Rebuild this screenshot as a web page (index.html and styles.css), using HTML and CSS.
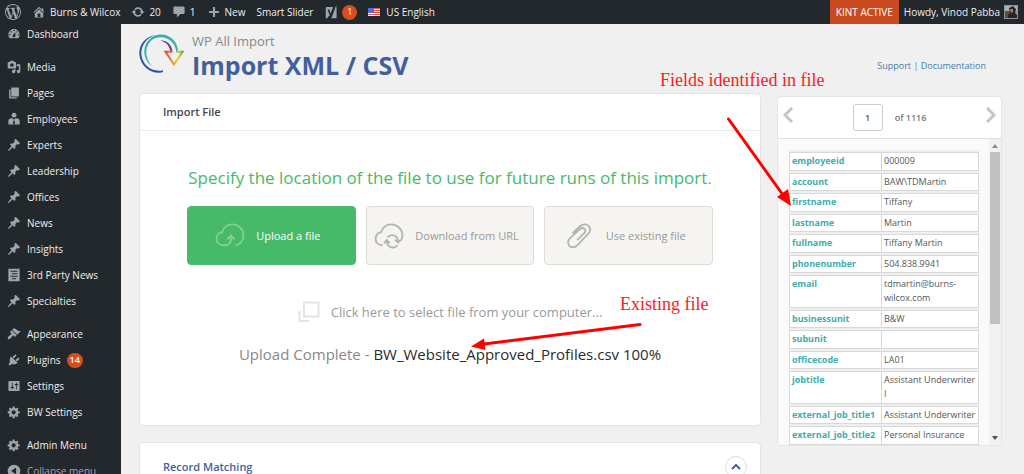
FILE: index.html
```html
<!DOCTYPE html>
<html lang="en">
<head>
<meta charset="utf-8">
<meta name="viewport" content="width=device-width, initial-scale=1">
<title>Import XML / CSV</title>
<link rel="stylesheet" href="styles.css">
</head>
<body>
<svg class="sprite" aria-hidden="true">
  <symbol id="pin" viewBox="0 0 20 20"><path d="M10.44 3.02l1.82-1.82 6.36 6.35-1.83 1.82c-1.05-.68-2.48-.57-3.41.36l-.75.75c-.92.93-1.04 2.35-.35 3.41l-1.83 1.82-2.41-2.41-2.8 2.79c-.42.42-3.38 2.71-3.8 2.29s1.86-3.39 2.28-3.81l2.79-2.79L4.1 9.36l1.83-1.82c1.05.69 2.48.57 3.4-.36l.75-.75c.93-.92 1.05-2.35.36-3.41z"/></symbol>
  <symbol id="gear" viewBox="0 0 20 20"><path d="M18 12h-2.18c-.17.7-.44 1.35-.81 1.93l1.54 1.54-2.1 2.1-1.54-1.54c-.58.36-1.23.63-1.91.79V19H8v-2.18c-.68-.16-1.33-.43-1.91-.79l-1.54 1.54-2.12-2.12 1.54-1.54c-.36-.58-.63-1.23-.79-1.91H1V9.03h2.17c.16-.7.44-1.35.8-1.94L2.43 5.55l2.1-2.1 1.54 1.54c.58-.37 1.24-.64 1.93-.81V2h3v2.18c.68.16 1.33.43 1.91.79l1.54-1.54 2.12 2.12-1.54 1.54c.36.59.64 1.24.8 1.94H18V12zm-8.5 1.5c1.66 0 3-1.34 3-3s-1.34-3-3-3-3 1.34-3 3 1.34 3 3 3z"/></symbol>
</svg>

<header class="topbar">
  <a class="bar-item" href="#" aria-label="WordPress"><svg class="icon icon-wp" viewBox="0 0 20 20"><path d="M20 10c0-5.51-4.49-10-10-10C4.48 0 0 4.49 0 10c0 5.52 4.48 10 10 10 5.51 0 10-4.48 10-10zM7.78 15.37L4.37 6.22c.55-.02 1.17-.08 1.17-.08.5-.06.44-1.13-.06-1.11 0 0-1.45.11-2.37.11-.18 0-.37 0-.58-.01C4.12 2.69 6.87 1.11 10 1.11c2.33 0 4.45.87 6.05 2.34-.68-.11-1.65.39-1.65 1.58 0 .74.45 1.36.9 2.1.35.61.55 1.36.55 2.46 0 1.49-1.4 5-1.4 5l-3.03-8.37c.54-.02.82-.17.82-.17.5-.05.44-1.25-.06-1.22 0 0-1.44.12-2.38.12-.87 0-2.33-.12-2.33-.12-.5-.03-.56 1.2-.06 1.22l.92.08 1.26 3.41zM17.41 10c.24-.64.74-1.87.43-4.25.7 1.29 1.05 2.71 1.05 4.25 0 3.29-1.73 6.24-4.4 7.78.97-2.59 1.94-5.2 2.92-7.78zM6.1 18.09C3.12 16.65 1.11 13.53 1.11 10c0-1.3.23-2.48.72-3.59C3.25 10.3 4.67 14.2 6.1 18.09zm4.03-6.63l2.58 6.98c-.86.29-1.76.45-2.71.45-.79 0-1.57-.11-2.29-.33.81-2.38 1.62-4.74 2.42-7.1z"/></svg></a>
  <a class="bar-item" href="#"><svg class="icon" viewBox="0 0 20 20"><path d="M16 8.5l1.53 1.53-1.06 1.06L10 4.6l-6.47 6.49-1.06-1.06L10 2.5l4 4v-2h2v4zm-6-2.46l6 5.99V18H4v-5.97zM12 17v-5H8v5h4z"/></svg>Burns &amp; Wilcox</a>
  <a class="bar-item" href="#"><svg class="icon" viewBox="0 0 20 20"><path d="M10.2 3.28c3.53 0 6.43 2.61 6.92 6h2.08l-3.5 4-3.5-4h2.32c-.45-1.97-2.21-3.45-4.32-3.45-1.45 0-2.73.71-3.54 1.78L4.95 5.66C6.23 4.2 8.11 3.28 10.2 3.28zm-.4 13.44c-3.52 0-6.43-2.61-6.92-6H.8l3.5-4c1.17 1.33 2.33 2.67 3.5 4H5.48c.45 1.97 2.21 3.45 4.32 3.45 1.45 0 2.73-.71 3.54-1.78l1.71 1.95c-1.28 1.46-3.15 2.38-5.25 2.38z"/></svg>20</a>
  <a class="bar-item" href="#"><svg class="icon" viewBox="0 0 20 20"><path d="M4 2h12c1.100 0 2 .9 2 2v7c0 1.100-.9 2-2 2h-4l-5 5v-5H4c-1.100 0-2-.9-2-2V4c0-1.100.9-2 2-2z"/></svg>1</a>
  <a class="bar-item" href="#"><svg class="icon" viewBox="0 0 20 20"><path d="M17 8.500v3h-5.500V17h-3v-5.500H3v-3h5.500V3h3v5.500z"/></svg>New</a>
  <a class="bar-item" href="#">Smart Slider</a>
  <a class="bar-item" href="#" aria-label="SEO, 1 notice"><svg class="icon" viewBox="0 0 20 20"><path d="M4 3h9L9.500 12 7.500 6.500H5l3.200 8.300c-.5 1.200-1.200 1.900-2.700 2.100V19H2.500V4.500C2.500 3.700 3.200 3 4 3zm13-1.500L11.500 16.500c-.3.900-.7 1.700-1.200 2.500H18V5.500c0-1-.2-1.600-.6-2.100l.9-1.900z"/></svg><span class="badge">1</span></a>
  <a class="bar-item" href="#"><svg class="flag" viewBox="0 0 12 8"><path fill="#fff" d="M0 0h12v8H0z"/><path stroke="#e8504c" d="M0 .5h12M0 2.500h12M0 4.500h12M0 6.500h12"/><path fill="#4a6ee0" d="M0 0h6v5H0z"/></svg>US English</a>
  <div class="bar-end">
    <a class="kint" href="#">KINT ACTIVE</a>
    <a class="bar-item" href="#">Howdy, Vinod Pabba
      <svg class="avatar" viewBox="0 0 14 14"><path fill="#8e9295" d="M0 0h14v14H0z"/><path fill="#9fb4bd" d="M1 1h12v5H1z"/><path fill="#6b4741" d="M1 6h5v7H1z"/><path fill="#2b2423" d="M5 3l4-2 3 3-1 4 2 2v3H4v-3l2-2z"/><path fill="#b5796a" d="M6 4l3 0v3l-2 1z"/></svg></a>
  </div>
</header>

<div class="shell">
  <nav class="menu" aria-label="Admin">
    <ul class="menu-group">
      <li><a href="#"><svg class="icon" viewBox="0 0 20 20"><path d="M3.760 16h12.480c1.100-1.370 1.760-3.110 1.760-5 0-4.420-3.580-8-8-8s-8 3.580-8 8c0 1.890.66 3.630 1.760 5zM10 4c.55 0 1 .45 1 1s-.45 1-1 1-1-.45-1-1 .45-1 1-1zM6 6c.55 0 1 .45 1 1s-.45 1-1 1-1-.45-1-1 .45-1 1-1zm8 0c.55 0 1 .45 1 1s-.45 1-1 1-1-.45-1-1 .45-1 1-1zm-5.370 5.550L12 7v6c0 1.100-.9 2-2 2s-2-.9-2-2c0-.57.24-1.080.63-1.450zM4 10c.55 0 1 .45 1 1s-.45 1-1 1-1-.45-1-1 .45-1 1-1zm12 0c.55 0 1 .45 1 1s-.45 1-1 1-1-.45-1-1 .45-1 1-1z"/></svg>Dashboard</a></li>
    </ul>
    <ul class="menu-group">
      <li><a href="#"><svg class="icon" viewBox="0 0 20 20"><path d="M13 11V4c0-.55-.45-1-1-1h-1.670L9 1H5L3.670 3H2c-.55 0-1 .45-1 1v7c0 .55.45 1 1 1h10c.55 0 1-.45 1-1zM7 4.500c1.380 0 2.500 1.120 2.500 2.500S8.380 9.500 7 9.500 4.500 8.380 4.500 7 5.620 4.500 7 4.500zM14 6h5v10.500c0 1.380-1.120 2.500-2.500 2.500S14 17.880 14 16.500s1.120-2.500 2.500-2.500c.17 0 .34.020.5.050V9h-3V6zm-4 8.050V13h2v3.500c0 1.380-1.120 2.500-2.500 2.500S7 17.880 7 16.500 8.120 14 9.500 14c.17 0 .34.020.5.050z"/></svg>Media</a></li>
      <li><a href="#"><svg class="icon" viewBox="0 0 20 20"><path d="M6 15V2h11v13H6zm-1 1h9v2H3V5h2v11z"/></svg>Pages</a></li>
      <li><a href="#"><svg class="icon" viewBox="0 0 20 20"><circle cx="10" cy="4.500" r="3.500"/><path d="M6 9h2l2 2 2-2h2c3 0 4 2 4 4v5H2v-5c0-2 1-4 4-4zm3.300 3l-.8 4.500L10 18l1.500-1.500-.8-4.500z"/></svg>Employees</a></li>
      <li><a href="#"><svg class="icon"><use href="#pin"/></svg>Experts</a></li>
      <li><a href="#"><svg class="icon"><use href="#pin"/></svg>Leadership</a></li>
      <li><a href="#"><svg class="icon"><use href="#pin"/></svg>Offices</a></li>
      <li><a href="#"><svg class="icon"><use href="#pin"/></svg>News</a></li>
      <li><a href="#"><svg class="icon"><use href="#pin"/></svg>Insights</a></li>
      <li><a href="#"><svg class="icon" viewBox="0 0 20 20"><path fill-rule="evenodd" d="M2 1h16v18H2zM5 4v1.500h10V4zm2 3.500V9h8V7.500zM5 11v1.500h10V11zm2 3.500V16h6v-1.500z"/></svg>3rd Party News</a></li>
      <li><a href="#"><svg class="icon"><use href="#pin"/></svg>Specialties</a></li>
    </ul>
    <ul class="menu-group">
      <li><a href="#"><svg class="icon" viewBox="0 0 20 20"><path d="M14.480 11.060L7.410 3.990l1.500-1.500c.5-.56 2.300-.47 3.510.32 1.210.8 1.430 1.280 2.910 2.100 1.180.64 2.450 1.260 4.450.85zm-.71.71L6.700 4.700 4.930 6.470c-.39.39-.39 1.020 0 1.410l1.060 1.060c.39.39.39 1.030 0 1.420-.6.6-1.430 1.110-2.210 1.690-.35.26-.7.53-1.010.84C1.430 14.230.4 16.080 1.400 17.070c.99 1 2.840-.03 4.180-1.360.31-.31.58-.66.85-1.020.57-.78 1.080-1.610 1.690-2.210.39-.39 1.020-.39 1.410 0l1.060 1.060c.39.39 1.020.39 1.410 0z"/></svg>Appearance</a></li>
      <li><a href="#"><svg class="icon" viewBox="0 0 20 20"><path d="M13.110 4.360L9.870 7.600 8 5.730l3.240-3.240c.35-.34 1.050-.2 1.560.32.52.51.66 1.210.31 1.550zm-8 1.770l.91-1.120 9.010 9.010-1.190.84c-.71.71-2.630 1.160-3.820 1.160H6.140L4.900 17.260c-.59.59-1.540.59-2.120 0-.59-.58-.59-1.530 0-2.120l1.240-1.240v-3.880c0-1.130.4-3.190 1.090-3.890zm7.260 3.970l3.240-3.240c.34-.35 1.040-.21 1.550.31.52.51.66 1.210.31 1.550l-3.240 3.250z"/></svg>Plugins<span class="badge">14</span></a></li>
      <li><a href="#"><svg class="icon" viewBox="0 0 20 20"><path d="M18 16V4c0-.55-.45-1-1-1H3c-.55 0-1 .45-1 1v12c0 .55.45 1 1 1h14c.55 0 1-.45 1-1zM8 11h1c.55 0 1 .45 1 1s-.45 1-1 1H8v1.500c0 .28-.22.5-.5.5s-.5-.22-.5-.5V13H6c-.55 0-1-.45-1-1s.45-1 1-1h1V5.500c0-.28.22-.5.5-.5s.5.22.5.5V11zm5-2h-1c-.55 0-1-.45-1-1s.45-1 1-1h1V5.500c0-.28.22-.5.5-.5s.5.22.5.5V7h1c.55 0 1 .45 1 1s-.45 1-1 1h-1v5.500c0 .28-.22.5-.5.5s-.5-.22-.5-.5V9z"/></svg>Settings</a></li>
      <li><a href="#"><svg class="icon"><use href="#gear"/></svg>BW Settings</a></li>
    </ul>
    <ul class="menu-group">
      <li><a href="#"><svg class="icon"><use href="#gear"/></svg>Admin Menu</a></li>
      <li><button class="collapse" type="button"><svg class="icon" viewBox="0 0 20 20"><path fill-rule="evenodd" d="M10 1a9 9 0 100 18 9 9 0 000-18zm3 4v10l-7-5z"/></svg>Collapse menu</button></li>
    </ul>
  </nav>

  <main class="content">
    <div class="primary">
      <div class="brand">
        <svg class="logo" viewBox="0 0 46 42">
          <defs>
            <linearGradient id="arrow" x1="0" x2="1"><stop offset="0" stop-color="#dc4437"/><stop offset=".5" stop-color="#f0a52a"/><stop offset=".75" stop-color="#f5d01f"/><stop offset="1" stop-color="#52b04a"/></linearGradient>
          </defs>
          <path fill="#2c50a4" d="M16 2C6 4 0 11.500.3 21 1 31.500 9 39.800 20 39.800c1.500 0 3-.2 4-.7v-1.900c-1 .4-2.500.5-4 .5C10.500 37.700 3 30.500 2.300 21 2 12.500 7 5.500 16 2z"/>
          <path fill="#36b0ac" d="M13 33C2 26 3 9 15 3 26-2 38.500 5.500 39 18h4.500l-1 1.800H37.200V18.500C36.500 8 26 2 16.500 5 6 9 4 24 13 33z"/>
          <path fill="#6a3f98" d="M21 7.500c7-1 12.500 4.500 12.500 12h-2.300c0-6-3.700-10.500-10.200-12z"/>
          <path fill="none" stroke="url(#arrow)" stroke-width="2" d="M33.500 18.800h-7L35 31.500l8.500-12.700h-6"/>
        </svg>
        <div class="brand-text">
          <p class="product">WP All Import</p>
          <h1 class="title">Import XML / CSV</h1>
        </div>
      </div>

      <section class="card">
        <h2 class="card-head">Import File</h2>
        <div class="card-body">
          <p class="lead">Specify the location of the file to use for future runs of this import.</p>
          <div class="sources">
            <button class="source source-active" type="button">
              <svg class="source-icon" viewBox="0 0 32 28"><path d="M12 24H9C4.500 24 1.500 21 1.500 17c0-3.600 2.500-6.500 6-7C9 5 13 1.500 18.500 1.500 25 1.500 30.500 7 30.500 13.500c0 5.500-3.500 9.500-8.500 10.500M11 24c3 0 6-2 6-7v-3m-4 3.500l4-4 4 4"/></svg>
              Upload a file</button>
            <button class="source" type="button">
              <svg class="source-icon" viewBox="0 0 32 28"><path d="M9 24C4.500 24 1.500 21 1.500 17c0-3.600 2.500-6.500 6-7C9 5 13 1.500 18.500 1.500 25 1.500 30.500 7 30.500 13.500c0 2-.5 3.500-1.500 5M14.500 15.500c3-4 10.500-3 11.500 4M22.500 18l3.500 3 3-3M25 24c-3 4-10.500 3-11.500-4M10.500 22l3-3.500 3.500 3"/></svg>
              Download from URL</button>
            <button class="source" type="button">
              <svg class="source-icon" viewBox="0 0 32 28"><path d="M8 11l8-7.500c4-3.500 8.500-2 10 .500 1.500 2.500 1 5.500-1 7.500L13 24c-3 3-7 2.500-8.500.5-2-2.500-1.500-6 .5-8L16 6.500c2-1.500 4-1.200 5 0 1.200 1.500 1 3.200-.5 4.500L13 18.500"/></svg>
              Use existing file</button>
          </div>
          <button class="picker" type="button">
            <svg class="picker-icon" viewBox="0 0 22 22"><path d="M6 1.500h14.500v14H6zM1.500 10v10H11"/></svg>
            Click here to select file from your computer...</button>
          <p class="status">Upload Complete - <span class="status-file">BW_Website_Approved_Profiles.csv 100%</span></p>
        </div>
      </section>

      <section class="card">
        <div class="card-row">
          <h2 class="card-link">Record Matching</h2>
          <button class="toggle" type="button" aria-label="Collapse section"><svg viewBox="0 0 10 6"><path d="M1 5l4-4 4 4"/></svg></button>
        </div>
      </section>
    </div>

    <aside class="secondary">
      <p class="help"><a href="#">Support</a> | <a href="#">Documentation</a></p>
      <section class="card record">
        <div class="pager">
          <button class="step" type="button" aria-label="Previous record"><svg viewBox="0 0 10 16"><path d="M9 1L2 8l7 7"/></svg></button>
          <label class="pager-label"><input class="page-input" type="text" value="1" aria-label="Record number"> of 1116</label>
          <button class="step" type="button" aria-label="Next record"><svg viewBox="0 0 10 16"><path d="M1 1l7 7-7 7"/></svg></button>
        </div>
        <div class="record-body">
          <div class="record-scroll">
            <table class="fields">
              <tbody>
              <tr><th scope="row">employeeid</th><td>000009</td></tr>
              <tr><th scope="row">account</th><td>BAW\TDMartin</td></tr>
              <tr><th scope="row">firstname</th><td>Tiffany</td></tr>
              <tr><th scope="row">lastname</th><td>Martin</td></tr>
              <tr><th scope="row">fullname</th><td>Tiffany Martin</td></tr>
              <tr><th scope="row">phonenumber</th><td>504.838.9941</td></tr>
              <tr><th scope="row">email</th><td>tdmartin@burns-wilcox.com</td></tr>
              <tr><th scope="row">businessunit</th><td>B&amp;W</td></tr>
              <tr><th scope="row">subunit</th><td></td></tr>
              <tr><th scope="row">officecode</th><td>LA01</td></tr>
              <tr><th scope="row">jobtitle</th><td>Assistant Underwriter I</td></tr>
              <tr><th scope="row">external_job_title1</th><td>Assistant Underwriter</td></tr>
              <tr><th scope="row">external_job_title2</th><td>Personal Insurance</td></tr>
              </tbody>
            </table>
          </div>
          <div class="scrollbar" aria-hidden="true">
            <svg class="scroll-arrow" viewBox="0 0 6 4"><path fill="#8a8a8a" d="M0 4l3-4 3 4z"/></svg>
            <span class="scroll-thumb"></span>
            <svg class="scroll-arrow" viewBox="0 0 6 4"><path fill="#505050" d="M0 0l3 4 3-4z"/></svg>
          </div>
        </div>
      </section>
    </aside>
  </main>
</div>

<svg class="arrows" viewBox="0 0 1024 474" width="1024" height="474" aria-hidden="true">
  <path class="arrow-line" d="M728.500 119L783 195M640 324.500L484 344"/>
  <path class="arrow-tip" d="M791 206l-14-9 11-8zM471 346.500l13-8 1.500 11.500z"/>
</svg>
<p class="note note-fields">Fields identified in file</p>
<p class="note note-file">Existing file</p>
</body>
</html>
```

FILE: styles.css
```css
* { box-sizing: border-box; }

body {
  margin: 0;
  height: 100vh;
  overflow: hidden;
  position: relative;
  display: flex;
  flex-direction: column;
  background: #f0f0f0;
  color: #444;
  font: 10px/14px "Open Sans", "Noto Sans", sans-serif;
}

h1, h2, p, ul { margin: 0; padding: 0; }
ul { list-style: none; }
a { color: inherit; text-decoration: none; }
button { font: inherit; color: inherit; background: none; border: 0; padding: 0; cursor: pointer; }
.sprite { position: absolute; width: 0; height: 0; }

/* Top bar */
.topbar {
  flex: none;
  height: 24px;
  display: flex;
  align-items: stretch;
  gap: 11px;
  padding-left: 5px;
  background: #23282d;
  color: #eee;
}
.bar-item { display: flex; align-items: center; gap: 4px; white-space: nowrap; }
.icon { width: 14px; height: 14px; flex: none; fill: #a0a5aa; }
.icon-wp { width: 16px; height: 16px; }
.badge {
  display: inline-flex;
  align-items: center;
  justify-content: center;
  min-width: 15px;
  height: 15px;
  padding: 0 3px;
  border-radius: 8px;
  background: #d54e21;
  color: #fff;
  font-size: 9px;
}
.flag { width: 12px; height: 8px; margin-right: 2px; }
.bar-end { margin-left: auto; display: flex; gap: 5px; padding-right: 6px; }
.kint { display: flex; align-items: center; padding: 0 6px; background: #ca4a1f; color: #fff; }
.avatar { width: 14px; height: 14px; }

/* Side menu */
.shell { flex: 1; display: flex; min-height: 0; }
.menu { flex: none; width: 121px; background: #23282d; color: #eee; }
.menu-group { display: grid; gap: 6px; margin-bottom: 13px; }
.menu-group a, .collapse {
  display: flex;
  align-items: center;
  gap: 6px;
  height: 20px;
  padding-left: 7px;
  white-space: nowrap;
}
.menu-group .badge { font-weight: 600; }
.collapse { color: #a0a5aa; }

/* Main area */
.content {
  flex: 1;
  min-width: 0;
  display: grid;
  grid-template-columns: minmax(0, 1fr) 225px;
  gap: 16px;
  padding: 0 22px 0 18px;
}
.primary { display: flex; flex-direction: column; gap: 16px; }
.brand { display: flex; gap: 7px; height: 53px; padding-top: 9px; }
.logo { width: 46px; height: 42px; }
.product { color: #888; font-size: 13px; line-height: 16px; }
.title { color: #425f9c; font-size: 25px; line-height: 32px; font-weight: 700; }

.card {
  background: #fff;
  border: 1px solid #e5e5e5;
  border-radius: 4px;
}
.card-head {
  padding: 11px 23px;
  border-bottom: 1px solid #ececec;
  color: #40464c;
  font-size: 11px;
  line-height: 14px;
  font-weight: 600;
}
.card-body {
  display: flex;
  flex-direction: column;
  align-items: center;
  padding: 33px 0 60px;
}
.lead { color: #46ba69; font-size: 17px; line-height: 28px; white-space: nowrap; }
.sources { display: flex; gap: 10px; width: 526px; margin-top: 14px; }
.source {
  flex: 1;
  height: 59px;
  display: flex;
  align-items: center;
  justify-content: center;
  gap: 11px;
  padding-right: 7px;
  border: 1px solid #dddcd9;
  border-radius: 4px;
  background: #f5f4f1;
  color: #999;
  font-size: 11px;
  white-space: nowrap;
}
.source-icon { width: 30px; height: 26px; fill: none; stroke: #b4b4b4; stroke-width: 2; }
.source-active { background: #46ba69; border-color: #46ba69; color: #fff; }
.source-active .source-icon { stroke: #7fd096; }
.picker {
  display: flex;
  align-items: center;
  gap: 11px;
  margin-top: 36px;
  color: #999;
  font-size: 13px;
  line-height: 22px;
}
.picker-icon { width: 22px; height: 22px; fill: none; stroke: #e4e4e4; stroke-width: 2; }
.status { margin-top: 20px; color: #888; font-size: 15px; line-height: 22px; }
.status-file { color: #2b2b2b; }

.card-row { display: flex; align-items: center; justify-content: space-between; padding: 13px 13px 13px 23px; }
.card-link { color: #425f9c; font-size: 11px; line-height: 14px; font-weight: 600; }
.toggle {
  width: 22px;
  height: 22px;
  display: flex;
  align-items: center;
  justify-content: center;
  border: 1px solid #ddd;
  border-radius: 50%;
}
.toggle svg { width: 10px; height: 6px; fill: none; stroke: #425f9c; stroke-width: 2; }

/* Record preview */
.secondary { display: flex; flex-direction: column; }
.help { padding: 35px 16px 23px 0; color: #3c7fae; font-size: 9px; text-align: right; }
.record { height: calc(100vh - 124px); display: flex; flex-direction: column; overflow: hidden; }
.pager {
  display: flex;
  align-items: flex-start;
  justify-content: space-between;
  padding: 7px 5px;
  border-bottom: 1px solid #e0e0e0;
}
.step { margin-top: 3px; height: 16px; }
.step svg { width: 10px; height: 16px; fill: none; stroke: #c4c4c4; stroke-width: 3; }
.pager-label { display: flex; align-items: center; gap: 12px; color: #777; font-size: 9px; font-weight: 600; }
.page-input {
  width: 30px;
  height: 27px;
  padding: 0;
  border: 1px solid #ccc;
  border-radius: 3px;
  background: #fff;
  color: #555;
  font: inherit;
  text-align: center;
}
.record-body { flex: 1; display: flex; min-height: 0; background: #fafafa; }
.record-scroll { flex: 1; overflow: hidden; padding: 11px 10px 0 11px; }
.fields { width: 100%; table-layout: fixed; border-collapse: separate; border-spacing: 0 2px; background: #efefef; font-size: 9px; line-height: 14px; }
.fields th, .fields td {
  padding: 1px 2px;
  border: 1px solid #d8d8d8;
  background: #fff;
  text-align: left;
  vertical-align: top;
}
.fields tr:nth-child(odd) > * { padding-bottom: 2px; }
.fields th { width: 92px; border-right: 0; color: #40acad; font-weight: 700; }
.fields td { color: #555; }
.scrollbar {
  width: 12px;
  display: flex;
  flex-direction: column;
  align-items: center;
  padding: 5px 1px;
  background: #f1f1f1;
}
.scroll-arrow { width: 6px; height: 4px; }
.scroll-thumb { width: 10px; height: 58%; margin: 4px 0 auto; background: #c1c1c1; }

/* Annotations over the page */
.arrows { position: absolute; top: 0; left: 0; pointer-events: none; }
.arrow-line { fill: none; stroke: #fe0000; stroke-width: 3; stroke-linecap: round; }
.arrow-tip { fill: #fe0000; }
.note { position: absolute; color: #fe1a1a; font: 18px/22px "Liberation Serif", serif; white-space: nowrap; }
.note-fields { left: 660px; top: 69px; }
.note-file { left: 620px; top: 293px; }
```
